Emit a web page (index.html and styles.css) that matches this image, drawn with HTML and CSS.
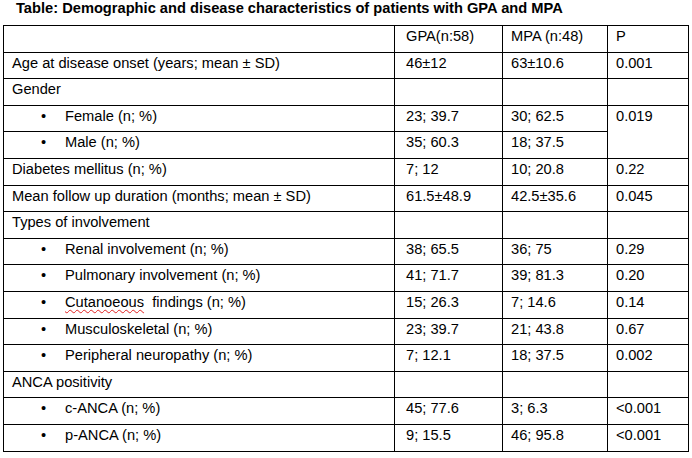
FILE: index.html
```html
<!DOCTYPE html>
<html>
<head>
<meta charset="utf-8">
<link rel="stylesheet" href="styles.css">
</head>
<body>
<div class="page">
  <p class="title">Table: Demographic and disease characteristics of patients with GPA and MPA</p>
  <table class="data">
    <colgroup>
      <col class="c-label">
      <col class="c-gpa">
      <col class="c-mpa">
      <col class="c-p">
    </colgroup>
    <tbody>
      <tr><td></td><td class="gpa">GPA(n:58)</td><td>MPA (n:48)</td><td>P</td></tr>
      <tr><td>Age at disease onset (years; mean ± SD)</td><td class="gpa">46±12</td><td>63±10.6</td><td>0.001</td></tr>
      <tr><td>Gender</td><td class="gpa"></td><td></td><td></td></tr>
      <tr><td class="item"><span class="bullet">•</span>Female (n; %)</td><td class="gpa">23; 39.7</td><td>30; 62.5</td><td rowspan="2">0.019</td></tr>
      <tr><td class="item"><span class="bullet">•</span>Male (n; %)</td><td class="gpa">35; 60.3</td><td>18; 37.5</td></tr>
      <tr><td>Diabetes mellitus (n; %)</td><td class="gpa">7; 12</td><td>10; 20.8</td><td>0.22</td></tr>
      <tr><td>Mean follow up duration (months; mean ± SD)</td><td class="gpa">61.5±48.9</td><td>42.5±35.6</td><td>0.045</td></tr>
      <tr><td>Types of involvement</td><td class="gpa"></td><td></td><td></td></tr>
      <tr><td class="item"><span class="bullet">•</span>Renal involvement (n; %)</td><td class="gpa">38; 65.5</td><td>36; 75</td><td>0.29</td></tr>
      <tr><td class="item"><span class="bullet">•</span>Pulmonary involvement (n; %)</td><td class="gpa">41; 71.7</td><td>39; 81.3</td><td>0.20</td></tr>
      <tr><td class="item"><span class="bullet">•</span><span class="spell">Cutanoeous</span>&nbsp; findings (n; %)</td><td class="gpa">15; 26.3</td><td>7; 14.6</td><td>0.14</td></tr>
      <tr><td class="item"><span class="bullet">•</span>Musculoskeletal (n; %)</td><td class="gpa">23; 39.7</td><td>21; 43.8</td><td>0.67</td></tr>
      <tr><td class="item"><span class="bullet">•</span>Peripheral neuropathy (n; %)</td><td class="gpa">7; 12.1</td><td>18; 37.5</td><td>0.002</td></tr>
      <tr><td>ANCA positivity</td><td class="gpa"></td><td></td><td></td></tr>
      <tr><td class="item"><span class="bullet">•</span>c-ANCA (n; %)</td><td class="gpa">45; 77.6</td><td>3; 6.3</td><td>&lt;0.001</td></tr>
      <tr><td class="item"><span class="bullet">•</span>p-ANCA (n; %)</td><td class="gpa">9; 15.5</td><td>46; 95.8</td><td>&lt;0.001</td></tr>
    </tbody>
  </table>
</div>
</body>
</html>
```
FILE: styles.css
```css
html, body {
  margin: 0;
  padding: 0;
  background: #ffffff;
}

body {
  font-family: "Liberation Sans", Arial, sans-serif;
  font-size: 14.67px;
  line-height: 15px;
  color: #000000;
}

.page {
  padding: 0 0 0 3px;
}

.title {
  margin: 0;
  padding: 1px 0 0 13px;
  height: 25px;
  box-sizing: border-box;
  font-weight: bold;
}

.data {
  border-collapse: collapse;
  table-layout: fixed;
  width: 685px;
}

.c-label { width: 391px; }
.c-gpa { width: 108px; }
.c-mpa { width: 105px; }
.c-p { width: 81px; }

.data td {
  border: 1px solid #000000;
  height: 26.6px;
  padding: 3px 8px 0 8px;
  vertical-align: top;
  white-space: nowrap;
  box-sizing: border-box;
}

.data td.gpa {
  padding-left: 11px;
}

.data td.item {
  padding-left: 37px;
}

.bullet {
  display: inline-block;
  width: 24px;
}

.spell {
  text-decoration: underline wavy #e02020;
  text-decoration-thickness: 1px;
  text-underline-offset: 2px;
}
```
